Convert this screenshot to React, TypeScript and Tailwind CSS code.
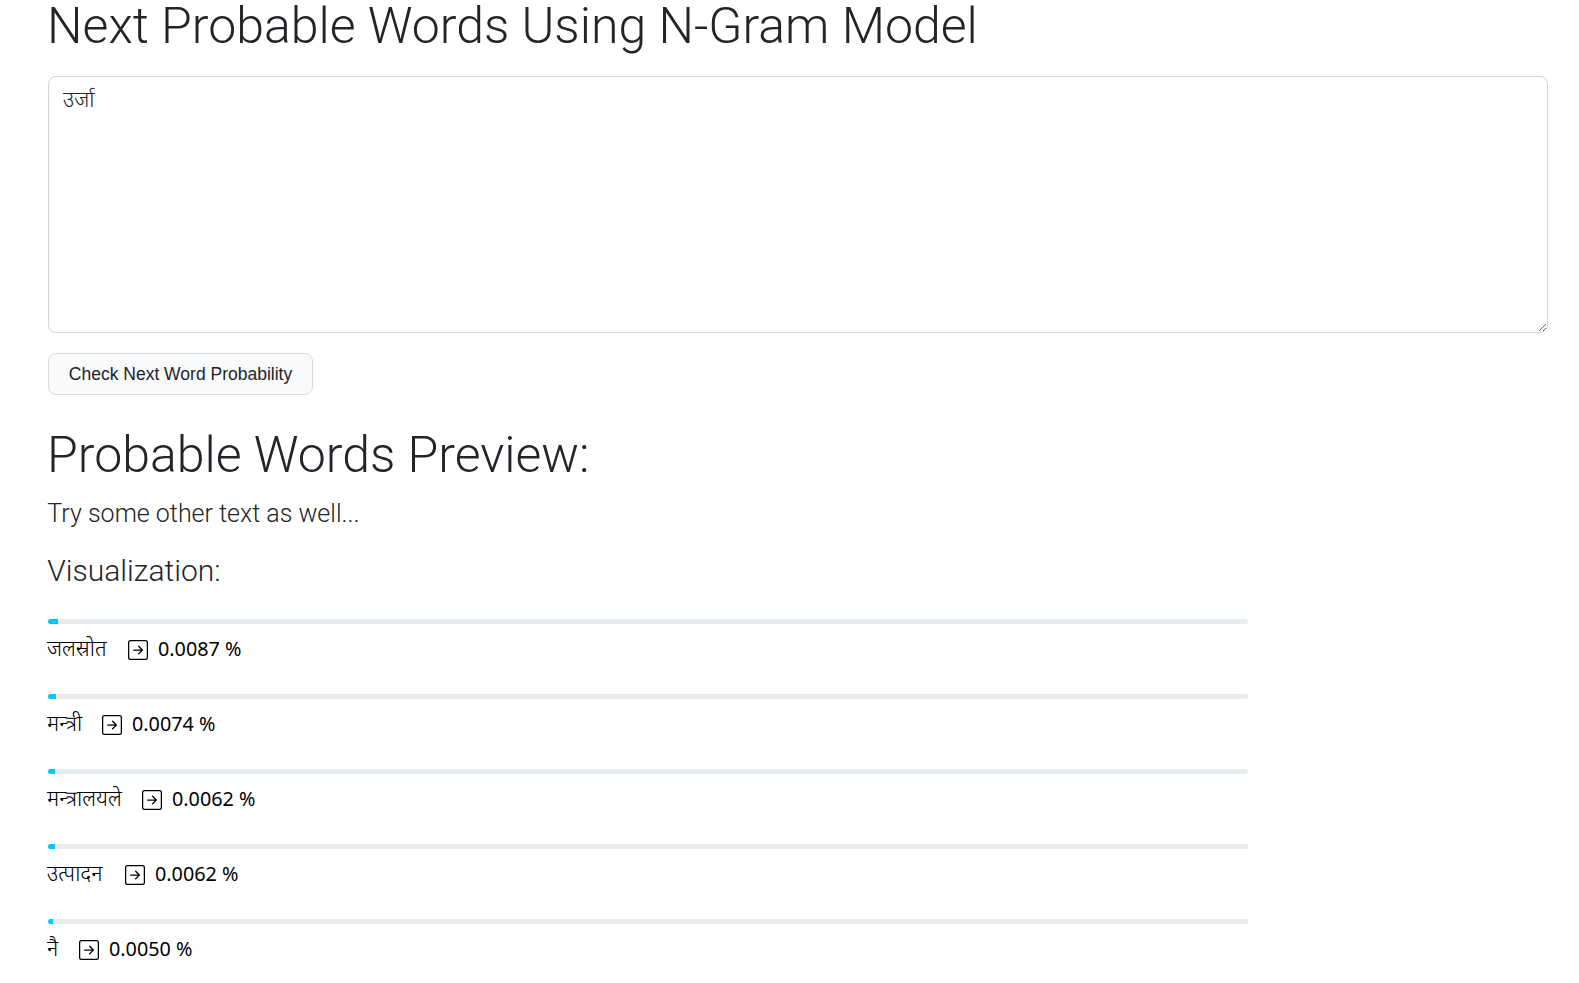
const rows = [
  { word: "जलस्रोत", value: "0.0087", bar: 10, w: 61 },
  { word: "मन्त्री", value: "0.0074", bar: 8, w: 35 },
  { word: "मन्त्रालयले", value: "0.0062", bar: 7, w: 75 },
  { word: "उत्पादन", value: "0.0062", bar: 7, w: 58 },
  { word: "नै", value: "0.0050", bar: 5, w: 12 },
];

function ArrowSquare() {
  return (
    <svg width="20" height="20" viewBox="0 0 16 16" fill="currentColor" className="shrink-0">
      <path fillRule="evenodd" d="M15 2a1 1 0 0 0-1-1H2a1 1 0 0 0-1 1v12a1 1 0 0 0 1 1h12a1 1 0 0 0 1-1zM0 2a2 2 0 0 1 2-2h12a2 2 0 0 1 2 2v12a2 2 0 0 1-2 2H2a2 2 0 0 1-2-2zm4.500 5.500a.5.5 0 0 0 0 1h5.793l-2.147 2.146a.5.5 0 0 0 .708.708l3-3a.5.5 0 0 0 0-.708l-3-3a.5.5 0 1 0-.708.708L10.293 7.500z" />
    </svg>
  );
}

export default function App() {
  return (
    <main className="flex h-[983px] flex-col bg-white pr-[31px] pl-12 font-[Roboto,sans-serif] text-[#212529]">
      <h1 className="-ml-px text-[50px] leading-[52px] font-light whitespace-nowrap">Next Probable Words Using N-Gram Model</h1>
      <textarea
        className="mt-6 block h-[257px] w-full shrink-0 resize rounded-lg border border-[#ced4da] px-[14px] pt-[10px] pb-2 font-['Noto_Sans_Devanagari',Roboto,sans-serif] text-[21.500px] leading-[30px] font-light outline-none"
        defaultValue="उर्जा"
      />
      <button className="mt-5 block h-[42px] w-[265px] shrink-0 rounded-lg border border-[#d9dadb] bg-[#f9fafc] font-['Liberation_Sans',sans-serif] text-[17.500px] text-[#212529]">
        Check Next Word Probability
      </button>
      <h2 className="mt-[30px] -ml-px text-[50px] leading-[60px] font-light">Probable Words Preview:</h2>
      <p className="mt-[10px] -ml-[0.7px] text-[25px] leading-[38px] font-light">Try some other text as well...</p>
      <h3 className="mt-5 -ml-[0.7px] text-[30px] leading-[36px] font-light">Visualization:</h3>
      <div className="mt-[30px] w-[1200px] text-black">
        {rows.map((r) => (
          <div key={r.word} className="h-[75px]">
            <div className="h-[5px] overflow-hidden rounded-full bg-[#e9ecef]">
              <div className="h-full bg-[#00c8f8]" style={{ width: r.bar }} />
            </div>
            <div className="mt-[10px] flex h-[30px] items-center text-[20px]">
              <span className="-ml-px pt-[3px] font-['Noto_Sans_Devanagari',Roboto,sans-serif] text-[21.500px] leading-[30px] font-[330] whitespace-nowrap" style={{ width: r.w + 1 }}>{r.word}</span>
              <span className="mt-px ml-[19px]"><ArrowSquare /></span>
              <span className="ml-[10px] font-['Noto_Sans',sans-serif] text-[19.800px] font-[450]">{r.value} %</span>
            </div>
          </div>
        ))}
      </div>
    </main>
  );
}
